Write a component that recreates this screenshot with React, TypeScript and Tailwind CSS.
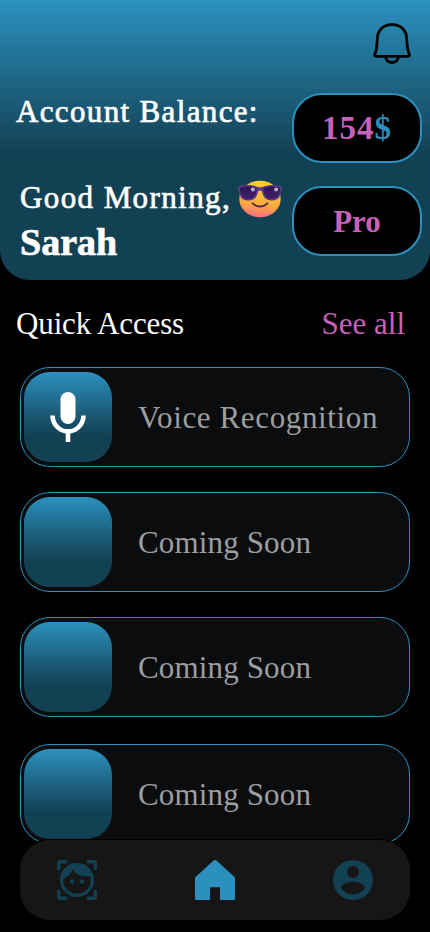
import React from "react";

function BellIcon() {
  return (
    <svg width="40" height="44" viewBox="0 0 40 44" fill="none" stroke="black" strokeWidth="2.8" strokeLinejoin="round">
      <path d="M20 3.6C10.5 3.6 5.6 10 5.3 17.5C5 23.5 5.1 27.5 2.9 33C2.3 34.6 2.7 35.3 4.4 35.3H35.8C37.4 35.3 37.8 34.6 37.2 33C35 27.5 35 23.5 34.7 17.5C34.4 10 29.5 3.6 20 3.6Z" />
      <path d="M13.6 36C14.4 40 16.8 41.5 20 41.5S25.7 40 26.4 36" />
    </svg>
  );
}

function MicIcon() {
  return (
    <svg width="36" height="50" viewBox="0 0 36 50">
      <rect x="10.5" y="0" width="15" height="32" rx="7.5" fill="white" />
      <path d="M2.5 23.5A15.5 15.9 0 0 0 33.5 23.5M18 39.5V50" fill="none" stroke="white" strokeWidth="4.6" />
    </svg>
  );
}

function CoolFace() {
  return (
    <svg width="46" height="38" viewBox="0 0 46 38">
      <defs>
        <linearGradient id="skin" x1="0.6" y1="0" x2="0.45" y2="1">
          <stop offset="0" stopColor="#ffcf2e" />
          <stop offset="0.65" stopColor="#fdab40" />
          <stop offset="1" stopColor="#f66d83" />
        </linearGradient>
        <linearGradient id="lens" x1="0" y1="0" x2="0" y2="1">
          <stop offset="0" stopColor="#30154f" />
          <stop offset="1" stopColor="#43206d" />
        </linearGradient>
      </defs>
      <ellipse cx="23" cy="19" rx="20.7" ry="18.3" fill="url(#skin)" />
      <path d="M1.5 6.5C4 4.7 15 4.4 20 6.7Q23 8 26 6.7C31 4.4 42 4.7 44.5 6.5C45.5 8 44.8 9 44.3 11.5C43 18.4 40 20.5 34.5 20.5C28.5 20.5 26 17 25 11.5Q23 9.6 21 11.5C20 17 17.5 20.5 11.5 20.5C6 20.5 3 18.4 1.7 11.5C1.2 9 .5 8 1.5 6.5Z" fill="#593b85" />
      <path d="M2.9 8C7 6 15.5 6 19.6 8.2C19.8 15.5 16.5 19.2 11.5 19.2C6.5 19.2 2.9 15 2.9 8ZM26.4 8.2C30.5 6 39 6 43.1 8C43.1 15 39.5 19.2 34.5 19.2C29.5 19.2 26.2 15.5 26.4 8.2Z" fill="url(#lens)" />
      <path d="M14 8.3Q16 6.8 18.1 8.6L17.6 11Q15.5 12 14 10.8ZM37.2 8.3Q39.2 6.8 41.3 8.6L40.8 11Q38.7 12 37.2 10.8Z" fill="#b8aace" />
      <path d="M15.5 23.2C19 27.6 27 27.6 30.5 23.2" fill="none" stroke="#593043" strokeWidth="1.9" strokeLinecap="round" />
    </svg>
  );
}

function FaceScanIcon() {
  return (
    <svg width="40" height="40" viewBox="0 0 40 40">
      <path d="M1.7 10V3.2Q1.7 1.7 3.2 1.7H10M30 1.7H36.8Q38.3 1.7 38.3 3.2V10M38.3 30V36.8Q38.3 38.3 36.8 38.3H30M10 38.3H3.2Q1.7 38.3 1.7 36.8V30" fill="none" stroke="#134154" strokeWidth="3.4" />
      <circle cx="20" cy="20" r="15.4" fill="none" stroke="#134154" strokeWidth="3.2" />
      <path d="M5 19.2C10 17.8 14 14.3 15.5 9.3C19 15 26 17.8 35 16C32.5 8 27 4 20 4C12 4 5 10 5 19.2Z" fill="#134154" />
      <circle cx="15" cy="21.5" r="2.3" fill="#134154" />
      <circle cx="25" cy="21.5" r="2.3" fill="#134154" />
    </svg>
  );
}

function HomeIcon() {
  return (
    <svg width="40" height="40" viewBox="0 0 40 40">
      <path d="M18.3.8Q20-.8 21.7.8L40 17.5V38.7Q40 40 38.7 40H26.3Q25 40 25 38.7V27.3H15V38.7Q15 40 13.7 40H1.3Q0 40 0 38.7V17.5Z" fill="#2b90be" />
    </svg>
  );
}

function ProfileIcon() {
  return (
    <svg width="40" height="40" viewBox="0 0 40 40">
      <circle cx="20" cy="20" r="20" fill="#134154" />
      <circle cx="20" cy="12" r="6.1" fill="#161616" />
      <path d="M8 28C10 19.8 30 19.8 32 28C26.5 36.4 13.5 36.4 8 28Z" fill="#161616" />
    </svg>
  );
}

const entries = [
  { label: "Voice Recognition", mic: true, space: "mb-[25px]", track: "tracking-[0.63px]" },
  { label: "Coming Soon", mic: false, space: "mb-[25px]", track: "tracking-[0.15px]" },
  { label: "Coming Soon", mic: false, space: "mb-[27px]", track: "tracking-[0.15px]" },
  { label: "Coming Soon", mic: false, space: "", track: "tracking-[0.15px]" },
];

export default function App() {
  return (
    <div className="flex h-[932px] w-[430px] flex-col overflow-hidden bg-black font-['Liberation_Serif',serif] text-[31px] leading-[40px] whitespace-nowrap text-white">
      <header className="flex h-[280px] shrink-0 justify-between rounded-b-[30px] bg-linear-to-b from-[#2b91bf] to-[#134154] to-55%">
        <div className="flex w-[276px] flex-col items-start pt-[92px] pl-4 [-webkit-text-stroke:0.7px_white]">
          <div className="tracking-[1.35px]">Account Balance:</div>
          <div className="mt-[46px] ml-1 flex">
            <span className="w-[217px] tracking-[1.4px]">Good Morning,</span>
            <span className="mt-[2px] h-[38px] w-[46px] shrink-0"><CoolFace /></span>
          </div>
          <div className="mt-[4px] ml-1 text-[38px] font-bold">Sarah</div>
        </div>
        <div className="flex flex-col items-end pt-[21px] pr-2 font-bold text-[#c561b9]">
          <div className="mr-[10px] h-[44px]"><BellIcon /></div>
          <div className="mt-7 flex h-[70px] w-[130px] items-center justify-center rounded-[30px] border-2 border-[#2b90be] bg-black text-[33px] tracking-[1px]">
            154<span className="text-[#2b90be]">$</span>
          </div>
          <div className="mt-[23px] flex h-[70px] w-[130px] items-center justify-center rounded-[30px] border-2 border-[#2b90be] bg-black pt-px">Pro</div>
        </div>
      </header>
      <main className="flex h-[559px] shrink-0 flex-col px-5">
        <div className="-ml-1 mt-6 mb-[23px] flex h-10 items-center justify-between pr-[5px]">
          <span className="tracking-[-0.13px]">Quick Access</span>
          <span className="text-[#c561b9]">See all</span>
        </div>
        {entries.map((entry, i) => (
          <div key={i} className={`flex h-[100px] shrink-0 items-center rounded-[30px] border border-[#2b90be] bg-[#0b0c0e] pl-[3px] ${entry.space}`}>
            <div className="flex h-[90px] w-[88px] items-center justify-center rounded-[26px] bg-linear-to-b from-[#2b91bf] to-[#134154] to-70%">
              {entry.mic && <MicIcon />}
            </div>
            <span className={`ml-[26px] pt-[2px] text-[#9d9e9f] ${entry.track}`}>{entry.label}</span>
          </div>
        ))}
      </main>
      <nav className="relative mx-5 mt-px flex h-20 shrink-0 items-center justify-between rounded-[30px] bg-[#161616] px-[37px] ring-1 ring-black">
        <FaceScanIcon />
        <HomeIcon />
        <ProfileIcon />
      </nav>
    </div>
  );
}
